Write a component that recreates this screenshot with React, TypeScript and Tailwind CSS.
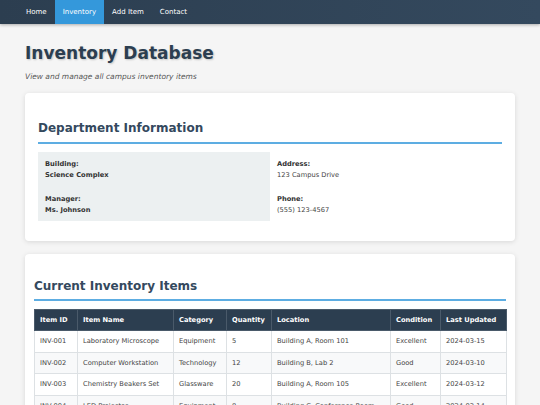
const navItems = ['Home', 'Inventory', 'Add Item', 'Contact'];

const items = [
  ['INV-001', 'Laboratory Microscope', 'Equipment', '5', 'Building A, Room 101', 'Excellent', '2024-03-15'],
  ['INV-002', 'Computer Workstation', 'Technology', '12', 'Building B, Lab 2', 'Good', '2024-03-10'],
  ['INV-003', 'Chemistry Beakers Set', 'Glassware', '20', 'Building A, Room 105', 'Excellent', '2024-03-12'],
  ['INV-004', 'LED Projector', 'Equipment', '8', 'Building C, Conference Room', 'Good', '2024-03-14'],
  ['INV-005', 'Lab Safety Goggles', 'Safety', '30', 'Building A, Storage', 'Good', '2024-03-08'],
];

const headers = ['Item ID', 'Item Name', 'Category', 'Quantity', 'Location', 'Condition', 'Last Updated'];
const widths = ['w-[43px]', 'w-[96px]', 'w-[53px]', 'w-[45px]', 'w-[119px]', 'w-[50px]', 'w-[66px]'];

export default function App() {
  return (
    <div className="min-h-screen bg-[#f5f5f5] font-['DejaVu_Sans',Verdana,sans-serif] text-[#333]">
      <nav className="h-[24px] bg-gradient-to-r from-[#2c3e50] to-[#34495e] shadow-[0_1px_3px_rgba(0,0,0,0.3)]">
        <ul className="flex h-full pl-[18px]">
          {navItems.map((n) => (
            <li
              key={n}
              className={`flex items-center px-[8px] text-[7px] text-white ${
                n === 'Inventory' ? 'bg-[#3498db]' : ''
              }`}
            >
              {n}
            </li>
          ))}
        </ul>
      </nav>

      <main className="px-[25px]">
        <header className="pt-[16px] pb-[11px]">
          <h1 className="text-[17px] leading-[26px] font-bold text-[#2c3e50] [text-shadow:1px_1px_2px_rgba(0,0,0,0.2)]">
            Inventory Database
          </h1>
          <p className="mt-[5px] text-[7.5px] italic text-[#555]">View and manage all campus inventory items</p>
        </header>

        <section className="rounded-[4px] bg-white px-[13px] pt-[26px] pb-[20px] shadow-[0_1px_5px_rgba(0,0,0,0.12)]">
          <h2 className="border-b-2 border-[#5dade2] pb-[5px] text-[12px] font-bold leading-[18px] text-[#34495e]">
            Department Information
          </h2>
          <div className="mt-[8px] grid grid-cols-2 text-[6.7px] leading-[11px]">
            <div className="flex flex-col gap-[13px] bg-[#ecf0f1] px-[7px] pt-[7px] pb-[5px]">
              <div>
                <div className="font-bold">Building:</div>
                <div className="font-bold">Science Complex</div>
              </div>
              <div>
                <div className="font-bold">Manager:</div>
                <div className="font-bold">Ms. Johnson</div>
              </div>
            </div>
            <div className="flex flex-col gap-[13px] px-[7px] pt-[7px] pb-[5px]">
              <div>
                <div className="font-bold">Address:</div>
                <div className="text-[#444]">123 Campus Drive</div>
              </div>
              <div>
                <div className="font-bold">Phone:</div>
                <div className="text-[#444]">(555) 123-4567</div>
              </div>
            </div>
          </div>
        </section>

        <section className="mt-[13px] rounded-[4px] bg-white px-[9px] pt-[23px] pb-[20px] shadow-[0_1px_5px_rgba(0,0,0,0.12)]">
          <h2 className="border-b-2 border-[#5dade2] pb-[4px] text-[12px] font-bold leading-[18px] text-[#34495e]">
            Current Inventory Items
          </h2>
          <table className="mt-[8px] w-full table-fixed border-collapse text-[6.7px]">
            <thead>
              <tr className="bg-[#2c3e50] text-white">
                {headers.map((h, i) => (
                  <th
                    key={h}
                    className={`${widths[i]} h-[21px] border border-[#4a5a6a] px-[5px] text-left font-bold`}
                  >
                    {h}
                  </th>
                ))}
              </tr>
            </thead>
            <tbody>
              {items.map((row, r) => (
                <tr key={row[0]} className={r % 2 === 1 ? 'bg-[#f8f9fa]' : 'bg-white'}>
                  {row.map((c, i) => (
                    <td
                      key={i}
                      className="h-[21.5px] truncate border border-[#dde1e4] px-[5px] text-[#444]"
                    >
                      {c}
                    </td>
                  ))}
                </tr>
              ))}
            </tbody>
          </table>
        </section>
      </main>
    </div>
  );
}
